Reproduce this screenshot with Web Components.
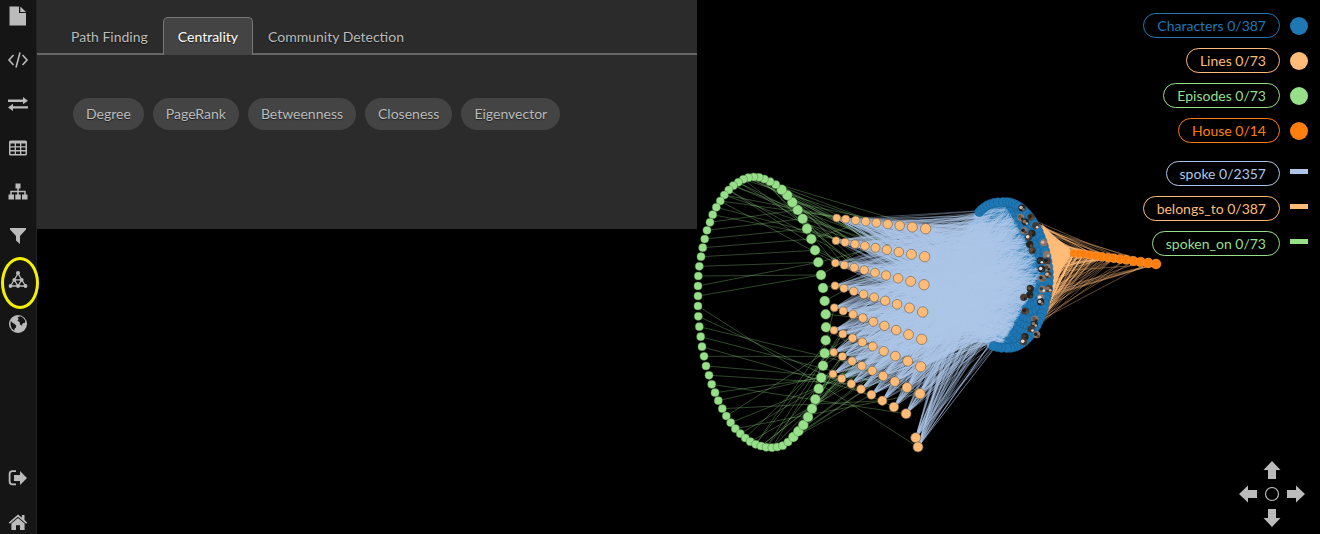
<!DOCTYPE html>
<html lang="en">
<head>
<meta charset="utf-8">
<title>Graph explorer</title>
<style>
html, body { margin: 0; height: 100%; background: #000; }
body { font-family: Lato, "Open Sans", sans-serif; font-size: 14px; line-height: 20px; color: #bbb; overflow: hidden; }
</style>
</head>
<body>
<graph-app></graph-app>
<script>
const define = (name, html, setup) => {
  const t = document.createElement('template');
  t.innerHTML = html;
  customElements.define(name, class extends HTMLElement {
    connectedCallback() {
      if (this.shadowRoot) return;
      const root = this.attachShadow({ mode: 'open' });
      root.append(t.content.cloneNode(true));
      if (setup) setup(this, root);
    }
  });
};

const icons = {
  file: '<path d="M1.500 0.500h9.500v6.500h7v12.500H1.500z"/><path d="M12.300 0.500L18 6h-5.700z"/>',
  code: '<path d="M5.500 5L1 10l4.500 5M14.500 5L19 10l-4.500 5M12 2.500L8 17.500" fill="none" stroke="currentColor" stroke-width="1.600"/>',
  swap: '<path d="M0 5.500h15V3l5 3.700-5 3.600V8H0zM20 12.200H5V9.800L0 13.400 5 17v-2.400h15z"/>',
  table: '<path fill-rule="evenodd" d="M2.500 2.500h15Q19 2.500 19 4v12q0 1.500-1.500 1.500h-15Q1 17.500 1 16V4q0-1.500 1.500-1.500zM2.500 5.500v2.700h4.200V5.500zm5.500 0v2.700h4V5.500zm5.300 0v2.700h4.200V5.500zM2.500 9.500v2.600h4.200V9.500zm5.500 0v2.600h4V9.500zm5.300 0v2.600h4.200V9.500zM2.500 13.400v2.700h4.200v-2.700zm5.500 0v2.700h4v-2.700zm5.300 0v2.700h4.200v-2.700z"/>',
  tree: '<path d="M7.500 1.500h5v5h-5zM0.500 12.500h5.500v5H.5zM7.300 12.500h5.500v5H7.300zM14 12.500h5.500v5H14z"/><path d="M10 6v7M3 13V9.500h14V13" fill="none" stroke="currentColor" stroke-width="1.500"/>',
  filter: '<path d="M2 2h16v1.500L12 10v8l-4-3.500V10L2 3.500z"/>',
  network: '<path d="M10 3.500L2.500 16h15zM6.300 9.800h7.400L10 16z" fill="none" stroke="currentColor" stroke-width="1.300"/><circle cx="10" cy="3" r="2"/><circle cx="6.300" cy="9.800" r="1.900"/><circle cx="13.700" cy="9.800" r="1.900"/><circle cx="2.500" cy="16" r="1.900"/><circle cx="10" cy="16" r="1.900"/><circle cx="17.500" cy="16" r="1.900"/>',
  globe: '<circle cx="10" cy="10" r="9"/><path fill="#151515" d="M9.500 3.200l2.800-.9 2.800 1.500 2.200 3-.5 2.200-2 .3-1.300 2.400-1.500-1.500-.4-2.200-2.200-1.300 1.300-1.600zM2.800 6.500l1.200 2 2.300 1.200 2 2-.4 1.800-1.400 1.200-.1 2-2.900-2.500-1-4z"/>',
  exit: '<path d="M8 3.200H4.500Q1.600 3.200 1.600 6v7.500q0 2.800 2.900 2.800H8" fill="none" stroke="currentColor" stroke-width="1.800"/><path d="M6 7h6V3l7 7-7 7v-4H6z"/>',
  home: '<path d="M10 2.500L.8 10.400l1.100 1.300L10 4.800l8.100 6.900 1.100-1.300L16.500 8V3h-2.600v2.800z"/><path d="M10 6l6.600 5.600V18H12v-4.800H8V18H3.400v-6.400z"/>',
  arrow: '<path d="M10 1l8.500 9H14v9H6v-9H1.500z"/>',
  ring: '<circle cx="10" cy="10" r="6.500" fill="none" stroke="currentColor" stroke-width="1.200"/>'
};

define('ui-icon', `<style>
:host { display: block; width: 20px; height: 20px; }
svg { display: block; width: 100%; height: 100%; fill: currentColor; overflow: visible; }
</style><svg viewBox="0 0 20 20" aria-hidden="true"></svg>`,
(el, root) => { root.querySelector('svg').innerHTML = icons[el.getAttribute('name')] || ''; });

define('rail-button', `<style>
:host { display: block; position: relative; }
button { display: grid; place-items: center; width: 100%; height: 24px; padding: 0; border: 0; background: none; color: #bbb; cursor: pointer; }
.mark { display: none; }
:host([current]) .mark { display: block; position: absolute; left: 1px; top: -11px; width: 32px; height: 46px; border: 3px solid #f5f000; border-radius: 50%; pointer-events: none; }
</style><button type="button"></button><span class="mark"></span>`,
(el, root) => {
  const button = root.querySelector('button');
  const icon = document.createElement('ui-icon');
  icon.setAttribute('name', el.getAttribute('icon'));
  button.setAttribute('aria-label', el.getAttribute('label'));
  button.append(icon);
});

define('side-rail', `<style>
:host { display: flex; flex-direction: column; justify-content: space-between; flex: none; width: 36px; padding-top: 4px; background: #151515; border-right: 1px solid #222; position: relative; z-index: 2; }
nav { display: flex; flex-direction: column; gap: 20px; }
</style>
<nav aria-label="Views">
<rail-button icon="file" label="File"></rail-button>
<rail-button icon="code" label="Query"></rail-button>
<rail-button icon="swap" label="Transfer"></rail-button>
<rail-button icon="table" label="Table"></rail-button>
<rail-button icon="tree" label="Hierarchy"></rail-button>
<rail-button icon="filter" label="Filter"></rail-button>
<rail-button icon="network" label="Algorithms" current></rail-button>
<rail-button icon="globe" label="Map"></rail-button>
</nav>
<nav aria-label="Session">
<rail-button icon="exit" label="Sign out"></rail-button>
<rail-button icon="home" label="Home"></rail-button>
</nav>`);

define('tab-button', `<style>
:host { display: block; margin-bottom: -2px; }
button { display: block; height: 38px; padding: 0 14px; border: 1px solid transparent; border-bottom: 0; border-radius: 5px 5px 0 0; background: none; color: #bbb; font: inherit; text-shadow: 0 1px 1px #0008; cursor: pointer; }
:host([selected]) button { background: #444; border-color: #777; color: #fff; }
</style><button type="button" role="tab"><slot></slot></button>`);

define('chip-button', `<style>
:host { display: block; }
button { display: block; height: 32px; padding: 0 13px; border: 0; border-radius: 16px; background: #444; color: #bbb; font: inherit; text-shadow: 0 1px 1px #0008; cursor: pointer; }
</style><button type="button"><slot></slot></button>`);

define('algorithm-panel', `<style>
:host { display: block; flex: none; align-self: flex-start; box-sizing: border-box; width: 50vw; padding: 17px 0 99px; background: #2b2b2b; }
.tabs { display: flex; padding-left: 19px; border-bottom: 2px solid #666; }
.chips { display: flex; flex-wrap: wrap; gap: 9px; padding: 43px 36px 0; }
</style>
<div class="tabs" role="tablist">
<tab-button>Path Finding</tab-button><tab-button selected>Centrality</tab-button><tab-button>Community Detection</tab-button>
</div>
<div class="chips">
<chip-button>Degree</chip-button><chip-button>PageRank</chip-button><chip-button>Betweenness</chip-button><chip-button>Closeness</chip-button><chip-button>Eigenvector</chip-button>
</div>`);

define('legend-item', `<style>
:host { display: flex; align-items: center; justify-content: flex-end; gap: 10px; color: var(--c); }
button { height: 25px; padding: 0 13px; border: 1px solid var(--c); border-radius: 13px; background: #000; color: inherit; font: inherit; line-height: 20px; cursor: pointer; }
i { width: 18px; height: 18px; border-radius: 50%; background: var(--c); }
:host([edge]) i { height: 5px; border-radius: 0; margin-bottom: 4px; }
</style><button type="button"><slot></slot></button><i></i>`);

define('graph-legend', `<style>
:host { display: grid; gap: 18px; }
div { display: grid; gap: 10px; }
</style>
<div>
<legend-item style="--c:#1f77b4">Characters 0/387</legend-item>
<legend-item style="--c:#ffbb78">Lines 0/73</legend-item>
<legend-item style="--c:#98df8a">Episodes 0/73</legend-item>
<legend-item style="--c:#ff7f0e">House 0/14</legend-item>
</div>
<div>
<legend-item edge style="--c:#aec7e8">spoke 0/2357</legend-item>
<legend-item edge style="--c:#ffbb78">belongs_to 0/387</legend-item>
<legend-item edge style="--c:#98df8a">spoken_on 0/73</legend-item>
</div>`);

define('pan-pad', `<style>
:host { display: grid; grid-template-columns: repeat(3, 24px); grid-template-rows: repeat(3, 24px); }
button { display: grid; place-items: center; padding: 0; border: 0; background: none; color: #bbb; cursor: pointer; }
.up { grid-area: 1 / 2; } .left { grid-area: 2 / 1; } .mid { grid-area: 2 / 2; } .right { grid-area: 2 / 3; } .down { grid-area: 3 / 2; }
.left ui-icon { transform: rotate(-90deg); } .right ui-icon { transform: rotate(90deg); } .down ui-icon { transform: rotate(180deg); }
</style>
<button type="button" class="up" aria-label="Pan up"><ui-icon name="arrow"></ui-icon></button>
<button type="button" class="left" aria-label="Pan left"><ui-icon name="arrow"></ui-icon></button>
<button type="button" class="mid" aria-label="Center"><ui-icon name="ring"></ui-icon></button>
<button type="button" class="right" aria-label="Pan right"><ui-icon name="arrow"></ui-icon></button>
<button type="button" class="down" aria-label="Pan down"><ui-icon name="arrow"></ui-icon></button>`);

define('graph-canvas', `<style>
:host { display: block; position: absolute; inset: 0; }
svg { display: block; width: 100%; height: 100%; }
</style><svg viewBox="37 0 1283 534" preserveAspectRatio="xMaxYMin meet" role="img" aria-label="Graph of characters, lines, episodes and houses"></svg>`,
(el, root) => {
  let seed = 7;
  const rnd = () => (seed = (seed * 16807) % 2147483647) / 2147483647;
  const pairs = s => s.split(' ').map(p => p.split(',').map(Number)).map(([x, y]) => [690 + x / 3, 160 + y / 3]);
  const f = n => n.toFixed(1);
  const line = (a, b) => `M${f(a[0])} ${f(a[1])}L${f(b[0])} ${f(b[1])}`;
  const dot = (p, r, extra = '') => `<circle cx="${f(p[0])}" cy="${f(p[1])}" r="${f(r)}" ${extra}/>`;

  const episodes = pairs('24,378 24,408 24,438 25,469 28,500 32,530 36,560 42,589 48,618 57,646 65,673 75,698 85,722 97,746 109,768 122,788 136,806 151,821 166,834 181,845 197,853 213,858 229,862 246,863 262,861 278,857 294,846 310,831 325,814 340,795 354,771 366,746 376,718 386,686 394,653 399,617 404,580 407,541 408,502 407,463 404,423 399,384 393,345 385,307 375,271 364,237 351,206 338,176 323,150 307,127 292,106 275,89 257,74 240,65 223,57 207,52 191,51 175,53 160,58 145,67 130,77 116,90 103,105 91,123 79,142 68,164 60,187 51,211 44,237 38,263 33,290 28,319 25,348');

  // Line nodes: perspective rows, plus the two strays at the bottom.
  const steps = [0, .101, .213, .326, .446, .573, .708, .85, 1];
  const rows = [[440,174,707,206],[438,242,704,290],[436,309,702,374],[435,377,698,456],[433,443,695,538],[432,511,692,620],[431,577,690,701],[429,642,687,782]];
  const lines = [];
  rows.forEach(([x0, y0, x1, y1], r) => steps.forEach((s, i) => {
    if (r === 7 && i === 8) return;
    lines.push([690 + (x0 + (x1 - x0) * s) / 3, 160 + (y0 + (y1 - y0) * s) / 3, 4 + s * 1.2]);
  }));
  lines.push([915.7, 437.7, 5], [918, 447, 5]);

  // Character disc: an ellipse that bulges to the left.
  const disc = (r, a) => {
    const c = Math.cos(a), s = Math.sin(a);
    const dx = c < 0 ? -44 * Math.pow(-c, .75) : 39 * c;
    return [1010 + r * (dx - (s < 0 ? 5 : 2) * Math.abs(s)), 275 + 73 * r * s];
  };
  const houses = '522,220 538,221 552,222 570,225 588,228 606,230 624,233 642,235 660,237 678,239 700,243 722,246 745,249 768,252'.split(' ').map(p => { const [x, y] = p.split(','); return [900 + x / 3, 180 + y / 3]; });

  let green = '';
  episodes.forEach((p, i) => {
    let t;
    if (i >= 66) t = episodes[48 - (i - 66)];
    else if (i >= 58) t = lines[(i * 5) % 22];
    else if (i >= 40) t = lines[(i * 7) % 24];
    else if (i >= 30) t = lines[36 + (i * 7) % 30];
    else if (i === 2) t = lines[72];
    else if (i < 2) t = episodes[43 - i];
    else if (i < 14) t = lines[54 + (i * 5) % 17];
    else t = lines[36 + (i * 11) % 30];
    green += line(p, t);
  });
  for (let i = 0; i < 14; i++) green += line(episodes[50 + i], lines[9 + (i * 5) % 14]);
  for (let i = 0; i < 8; i++) green += line(episodes[20 + i], lines[45 + (i * 5) % 14]);

  let blueA = '', blueB = '';
  for (let i = 0; i < 2357; i++) {
    const s = lines[(i * 31) % 73];
    const q = disc(Math.sqrt(rnd()) * .95, rnd() * Math.PI * 2);
    const mid = Math.abs(q[1] - 272) / 75;
    const t = [Math.min(q[0] - 4, 1040 - 42 * mid + rnd() * 4), q[1]];
    if (i % 2) blueA += line(s, t); else blueB += line(s, t);
  }

  let chars = '', ring = '', photos = '', belongs = '';
  for (let i = 0; i < 387; i++) chars += dot(disc(Math.sqrt(i / 387), i * 2.39996), 4.6);
  for (let i = 0; i < 54; i++) ring += dot(disc(1, -2.1 + i * 3.9 / 53), 4.6);

  const tones = ['#26221f', '#4b3a30', '#8d7566', '#c7b5a8', '#182229', '#6a513f', '#e2dbd5', '#313b44'];
  const faces = '366,84 393,111 362,112 376,126 407,137 372,152 396,160 386,172 431,188 389,193 397,211 440,223 421,242 441,243 442,263 425,267 444,284 426,295 391,326 446,326 427,328 389,345 371,352 422,353 422,366 376,393 405,417 403,432 393,447 410,464 375,470 371,485'.split(' ');
  faces.forEach((pt, i) => {
    const [x, y] = pt.split(',').map(v => v / 3), cx = 900 + x, cy = 180 + y;
    photos += dot([cx, cy], 3.6, `fill="${tones[i % 3]}"`) + dot([cx - 1, cy - .5], 1.8, `fill="${tones[(i * 5 + 3) % 8]}"`) + dot([cx + 1.5, cy + 1.5], 1.3, `fill="${tones[(i * 3 + 2) % 8]}"`);
  });
  for (let i = 0; i < 150; i++) {
    const p = disc(1, -.85 + rnd() * 1.75);
    belongs += line([p[0] + 2, p[1]], houses[Math.floor(Math.pow(rnd(), 1.9) * 14)]);
  }

  root.querySelector('svg').innerHTML = `
  <path d="${green}" stroke="#98df8a" stroke-opacity=".4" stroke-width=".8"/>
  <g fill="#1f77b4" stroke="#175d90" stroke-width=".5">${chars}</g>
  <path d="${belongs}" stroke="#ffbb78" stroke-opacity=".55" stroke-width=".7"/>
  <path d="M1042 224L1054 236 1070 249 1070 257 1062 269 1053 292z" fill="#ffbb78"/>
  <path d="${blueA}" stroke="#aec7e8" stroke-opacity=".6" stroke-width=".6"/>
  <path d="${blueB}" stroke="#aec7e8" stroke-opacity=".6" stroke-width=".6"/>
  <g fill="#1f77b4" stroke="#175d90" stroke-width=".5">${ring}</g>
  ${photos}
  <g fill="#98df8a" stroke="#3d6b35" stroke-width=".4">${episodes.map((p, i) => dot(p, i > 26 && i < 52 ? 5 : 4.1)).join('')}</g>
  <g fill="#ffbb78" stroke="#6b5a45" stroke-width=".6">${lines.map(p => dot(p, p[2])).join('')}</g>
  <g fill="#ff7f0e" stroke="#ffa14d" stroke-width=".5">${houses.map((p, i) => dot(p, 4 + i / 14)).join('')}</g>`;
});

define('graph-app', `<style>
:host { display: flex; min-height: 100vh; background: #000; }
main { position: relative; flex: 1; display: flex; justify-content: space-between; }
algorithm-panel, aside { position: relative; }
aside { display: flex; flex-direction: column; justify-content: space-between; align-items: flex-end; padding: 13px 12px 4px 0; }
</style>
<side-rail></side-rail>
<main>
<graph-canvas></graph-canvas>
<algorithm-panel></algorithm-panel>
<aside><graph-legend></graph-legend><pan-pad></pan-pad></aside>
</main>`);
</script>
</body>
</html>
